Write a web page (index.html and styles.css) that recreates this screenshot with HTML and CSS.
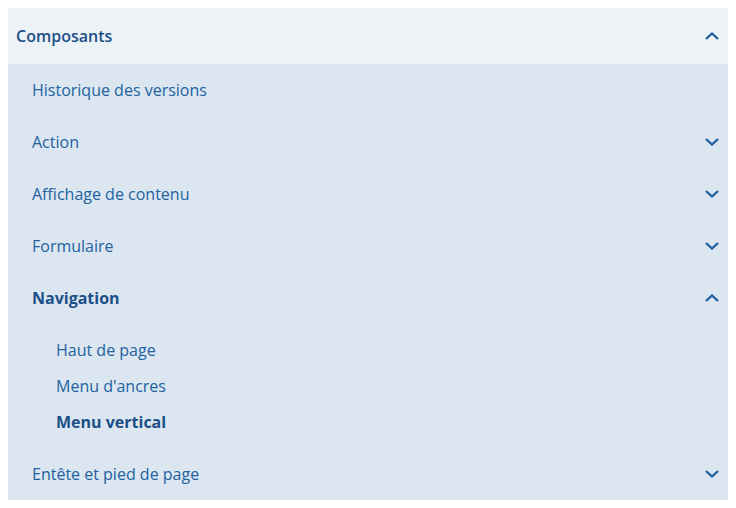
FILE: index.html
```html
<!DOCTYPE html>
<html lang="fr">
<head>
<meta charset="utf-8">
<link rel="stylesheet" href="styles.css">
</head>
<body>
<nav class="menu">
  <div class="head">
    <span class="head-title">Composants</span>
    <svg class="chev" viewBox="0 0 16 8" width="16" height="8"><path d="M2 7 L8 1.5 L14 7" /></svg>
  </div>
  <div class="body">
    <div class="row"><span>Historique des versions</span></div>
    <div class="row"><span>Action</span><svg class="chev" viewBox="0 0 16 8" width="16" height="8"><path d="M2 1 L8 6.5 L14 1" /></svg></div>
    <div class="row"><span>Affichage de contenu</span><svg class="chev" viewBox="0 0 16 8" width="16" height="8"><path d="M2 1 L8 6.5 L14 1" /></svg></div>
    <div class="row"><span>Formulaire</span><svg class="chev" viewBox="0 0 16 8" width="16" height="8"><path d="M2 1 L8 6.5 L14 1" /></svg></div>
    <div class="row active"><span>Navigation</span><svg class="chev" viewBox="0 0 16 8" width="16" height="8"><path d="M2 7 L8 1.5 L14 7" /></svg></div>
    <div class="sub">
      <div class="sub-row">Haut de page</div>
      <div class="sub-row">Menu d'ancres</div>
      <div class="sub-row current">Menu vertical</div>
    </div>
    <div class="row"><span>Entête et pied de page</span><svg class="chev" viewBox="0 0 16 8" width="16" height="8"><path d="M2 1 L8 6.5 L14 1" /></svg></div>
  </div>
</nav>
</body>
</html>
```
FILE: styles.css
```css
html, body {
  margin: 0;
  padding: 0;
  background: #ffffff;
}
body {
  padding: 8px;
  font-family: "Open Sans", "Noto Sans", sans-serif;
  font-size: 16px;
  color: #2262a0;
}
.menu {
  width: 720px;
}
.head {
  height: 56px;
  background: #edf2f7;
  display: flex;
  align-items: center;
  justify-content: space-between;
  padding: 0 8px;
  box-sizing: border-box;
}
.head-title {
  font-weight: 600;
  color: #1b4f88;
}
.body {
  background: #dbe6f0;
}
.row {
  height: 52px;
  display: flex;
  align-items: center;
  justify-content: space-between;
  padding: 0 8px 0 24px;
  box-sizing: border-box;
}
.row.active {
  font-weight: 700;
  color: #1b4f88;
}
.chev {
  display: block;
  fill: none;
  stroke: #1c5a9c;
  stroke-width: 2.2;
  stroke-linecap: butt;
  stroke-linejoin: miter;
}
.sub {
  padding: 8px 0;
}
.sub-row {
  height: 36px;
  display: flex;
  align-items: center;
  padding-left: 48px;
}
.sub-row.current {
  font-weight: 700;
  color: #1b4f88;
}
```
